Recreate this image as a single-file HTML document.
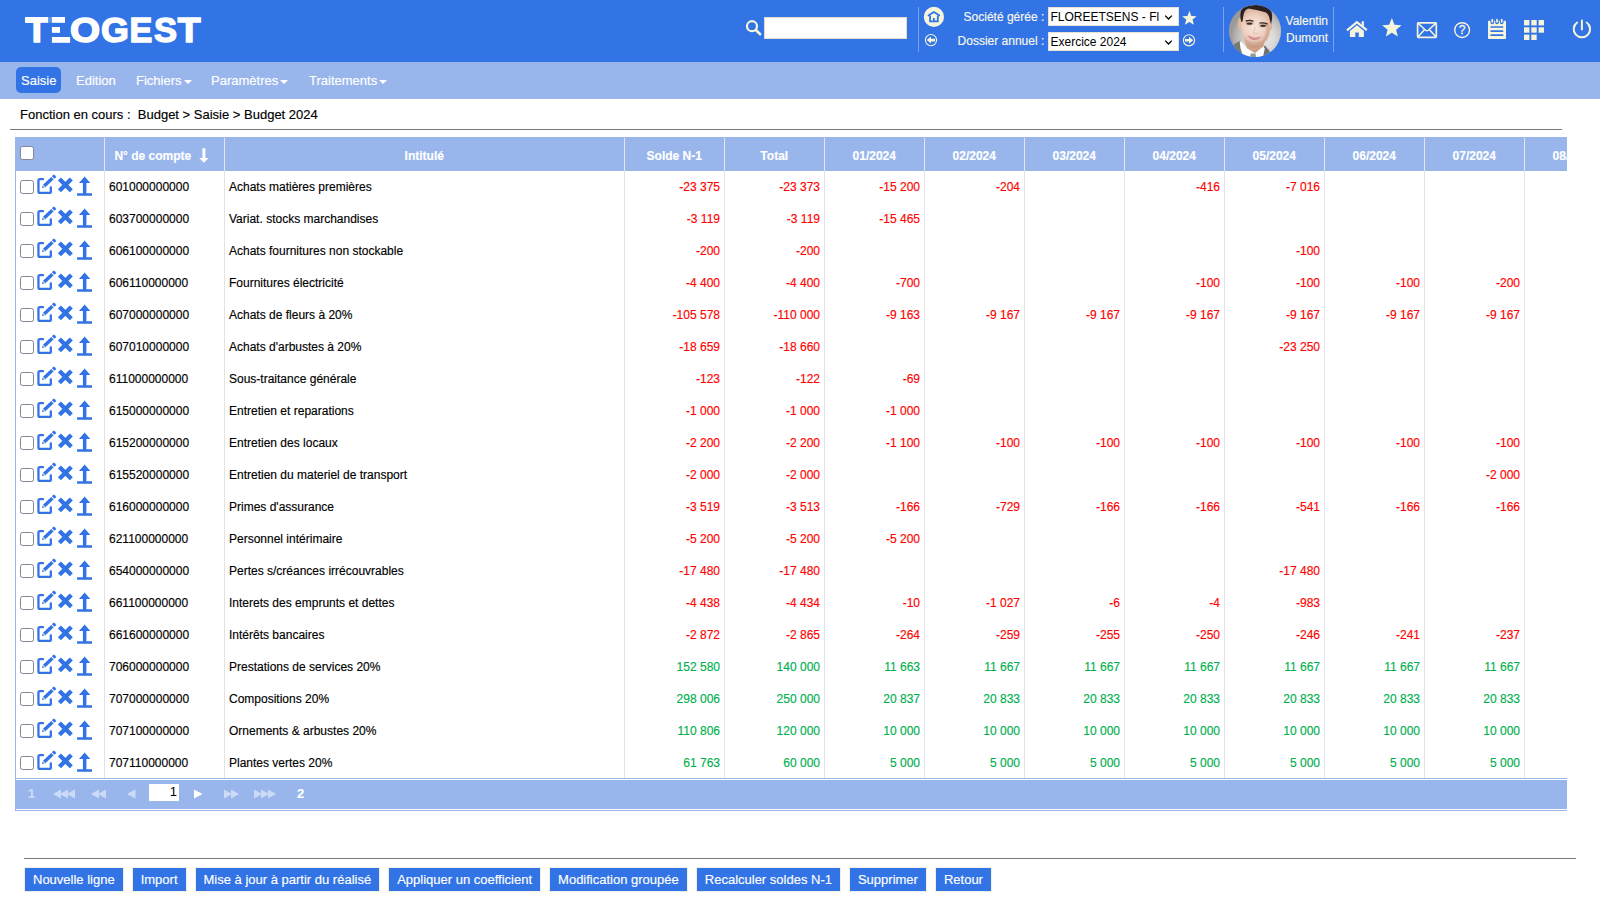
<!DOCTYPE html>
<html lang="fr"><head><meta charset="utf-8"><title>TEOGEST - Budget 2024</title>
<style>
*{box-sizing:border-box;}
html,body{margin:0;padding:0;}
body{width:1600px;height:900px;overflow:hidden;background:#fff;font-family:"Liberation Sans",sans-serif;font-size:12px;color:#000;position:relative;}
.abs{position:absolute;}
#top{position:absolute;left:0;top:0;width:1600px;height:62px;background:#3273e6;}
#nav{position:absolute;left:0;top:62px;width:1600px;height:37px;background:#99b6ec;}
#nav .it{position:absolute;top:5px;height:26px;line-height:28px;font-size:13px;color:#fff;white-space:nowrap;}
#nav .act{background:#3273e6;border-radius:5px;padding:0 5px;}
#nav .caret{display:inline-block;width:0;height:0;border-left:4px solid transparent;border-right:4px solid transparent;border-top:4px solid #fff;vertical-align:middle;margin-left:2px;position:relative;top:0px;}
#crumb{position:absolute;left:20px;top:107px;font-size:13px;line-height:16px;white-space:pre;color:#000;}
.hr{position:absolute;height:1px;background:#7a7a7a;}
#grid{position:absolute;left:15px;top:137px;width:1552px;height:674px;overflow:hidden;border-left:1px solid #99b6ec;}
#gridin{position:absolute;left:-1px;top:0;width:1700px;}
.hrow{height:34px;background:#99b6ec;white-space:nowrap;display:flex;}
.hc{height:34px;line-height:34px;font-weight:bold;color:#fff;text-align:center;font-size:12px;position:relative;flex:none;padding-top:2px;padding-right:1.5px;}
.hc:after{content:"";position:absolute;right:0;top:1px;bottom:0;width:1px;background:#e4e6ea;}
.row{height:32px;display:flex;white-space:nowrap;}
.c{height:32px;line-height:32px;border-right:1px solid #e2e2e2;flex:none;padding:0 4px;position:relative;overflow:hidden;}
.c0{width:90px;}
.c1{width:120px;}
.c2{width:400px;}
.cn{width:100px;}
.c.cn{text-align:right;}
.neg{color:#ff0000;}
.pos{color:#00b050;}
.cb{position:absolute;left:5px;top:9px;width:14px;height:14px;border:1px solid #85859a;border-radius:2.5px;background:#fff;}
.hcb{top:9px;}
.ic{position:absolute;overflow:visible;}
.ie{left:22px;top:4px;}
.ix{left:42px;top:6px;}
.iu{left:62px;top:5px;}
.sortarrow{position:absolute;left:93.6px;top:11px;}
#pager{position:absolute;left:15px;top:778px;width:1552px;height:33px;border-left:1px solid #99b6ec;}
#btns{position:absolute;left:24px;top:867px;display:flex;gap:8px;}
.btn{height:25px;line-height:23px;background:#3273e6;color:#fff;font-size:13px;border:1px solid #f1eee4;padding:0 8px;white-space:nowrap;flex:none;}
.lbl{font-size:12px;color:#f8f8ea;text-align:right;line-height:19px;white-space:nowrap;}
.sel{width:131px;height:19px;background:#fff;border:1px solid #e9e2d2;border-radius:0;font-size:12px;line-height:19px;color:#000;overflow:hidden;white-space:nowrap;}
.sel span{position:absolute;left:1.5px;top:0;width:109px;overflow:hidden;display:block;}
.sel .chev{position:absolute;right:5px;top:6px;}
.uname{font-size:12px;line-height:17px;color:#f8f8e8;text-align:right;white-space:nowrap;}
.pg{font-size:13px;font-weight:bold;color:#fff;line-height:16px;}
.dim{opacity:.5;}
.hc.c1{text-align:left;padding-left:9.4px;}
.c,#crumb{-webkit-text-stroke:0.15px currentColor;}
#nav .it,.btn,.lbl,.uname,.hc,.pg{-webkit-text-stroke:0.15px currentColor;}

</style></head>
<body>
<div id="top">
<svg class="abs" style="left:0;top:0" width="230" height="62" viewBox="0 0 230 62" role="img" aria-label="TEOGEST"><title>TEOGEST</title>
<g font-family="Liberation Sans, sans-serif" font-weight="bold" font-size="34" fill="#fff" stroke="#fff" stroke-width="1.4">
<text transform="translate(25.57 42.02) scale(1.0871 1.0424)">T</text>
<text transform="translate(42.96 42.02) scale(1.2293 1.0424)">E</text>
<rect x="41.3" y="15" width="29.3" height="29" fill="#3273e6" stroke="none"/>
<rect x="25.3" y="17" width="23.1" height="5.8" fill="#fff" stroke="none"/>
<rect x="48.4" y="17" width="3.5" height="5.8" fill="#5f92ec" stroke="none"/>
<rect x="51.9" y="17" width="13.1" height="5.8" fill="#fff" stroke="none"/>
<rect x="51.9" y="27" width="8.1" height="5.8" fill="#fff" stroke="none"/>
<rect x="51.9" y="37" width="18.1" height="5.8" fill="#fff" stroke="none"/>
<text transform="translate(70.05 42.06) scale(1.1400 1.0392)">O</text>
<text transform="translate(100.96 42.06) scale(1.0536 1.0392)">G</text>
<text transform="translate(129.49 42.12) scale(1.0049 1.0424)">E</text>
<text transform="translate(154.05 42.06) scale(1.0161 1.0392)">S</text>
<text transform="translate(177.77 42.12) scale(1.0965 1.0424)">T</text>
</g>
</svg>
<svg class="abs" style="left:744px;top:18px" width="20" height="20" viewBox="0 0 20 20"><circle cx="8" cy="8.2" r="5" fill="none" stroke="#f5f5dc" stroke-width="2.2"/><path d="M11.8 12L16.2 16.2" stroke="#f5f5dc" stroke-width="2.6" stroke-linecap="round"/></svg>
<div class="abs" style="left:764px;top:17px;width:142.5px;height:22px;background:#fff;border:1px solid #e6dcc8;"></div>
<div class="abs" style="left:918px;top:7px;width:1px;height:45px;background:#7aa3ee;"></div>
<svg class="abs" style="left:923px;top:6px" width="22" height="22" viewBox="0 0 22 22"><circle cx="10.9" cy="10.9" r="10.1" fill="#f5f5dc"/><path d="M4.9 9.8L10.9 6L16.9 9.8" fill="none" stroke="#3273e6" stroke-width="1.7" stroke-linejoin="miter"/><path d="M7.1 9.6V15.4H14.8V9.6" fill="none" stroke="#3273e6" stroke-width="1.8"/><rect x="10" y="12" width="1.8" height="3.2" fill="#3273e6"/></svg>
<svg class="abs" style="left:924px;top:33px" width="15" height="15" viewBox="0 0 15 15"><circle cx="7" cy="7.1" r="5.6" fill="none" stroke="#f5f5dc" stroke-width="1.1"/><path d="M2.8 7.1L7 3.6V5.8H11.1V8.4H7V10.6Z" fill="#f5f5dc"/></svg>
<div class="abs lbl" style="left:940px;top:8px;width:104.3px;">Société gérée :</div>
<div class="abs lbl" style="left:940px;top:32px;width:104.3px;">Dossier annuel :</div>
<div class="abs sel" style="left:1048px;top:7px;"><span>FLOREETSENS - Fl</span><svg class="chev" width="9" height="7" viewBox="0 0 9 7"><path d="M1.2 1.6L4.5 5L7.8 1.6" fill="none" stroke="#000" stroke-width="1.3"/></svg></div>
<div class="abs sel" style="left:1048px;top:32px;line-height:18px;"><span>Exercice 2024</span><svg class="chev" width="9" height="7" viewBox="0 0 9 7"><path d="M1.2 1.6L4.5 5L7.8 1.6" fill="none" stroke="#000" stroke-width="1.3"/></svg></div>
<svg class="abs" style="left:1181px;top:9.5px" width="17" height="17" viewBox="0 0 17 17"><path d="M8.40 1.00L10.34 5.93L15.63 6.25L11.54 9.62L12.87 14.75L8.40 11.90L3.93 14.75L5.26 9.62L1.17 6.25L6.46 5.93Z" fill="#f5f5dc"/></svg>
<svg class="abs" style="left:1181px;top:33px" width="16" height="15" viewBox="0 0 16 15"><circle cx="8" cy="7.3" r="5.6" fill="none" stroke="#f5f5dc" stroke-width="1.1"/><path d="M12.2 7.3L8 3.8V6H3.9V8.6H8V10.8Z" fill="#f5f5dc"/></svg>
<div class="abs" style="left:1223px;top:7px;width:1px;height:45px;background:#7aa3ee;"></div>
<svg class="abs" style="left:1226px;top:2px" width="58" height="58" viewBox="0 0 900 900">
<defs>
<clipPath id="avc"><circle cx="450" cy="450" r="405"/></clipPath>
<radialGradient id="avbg" gradientUnits="userSpaceOnUse" cx="540" cy="560" r="470"><stop offset="0" stop-color="#eeecea"/><stop offset="0.45" stop-color="#dcdad7"/><stop offset="0.8" stop-color="#b9b7b5"/><stop offset="1" stop-color="#9c9a99"/></radialGradient>
<radialGradient id="avskin" gradientUnits="userSpaceOnUse" cx="440" cy="380" r="330"><stop offset="0" stop-color="#f7e6dd"/><stop offset="0.5" stop-color="#efd2c2"/><stop offset="0.85" stop-color="#dcb29b"/><stop offset="1" stop-color="#b98b70"/></radialGradient>
<filter id="avbl" x="-5%" y="-5%" width="110%" height="110%"><feGaussianBlur stdDeviation="9"/></filter>
<filter id="avbl2" x="-20%" y="-20%" width="140%" height="140%"><feGaussianBlur stdDeviation="14"/></filter>
</defs>
<g clip-path="url(#avc)">
<rect x="0" y="0" width="900" height="900" fill="url(#avbg)"/>
<g filter="url(#avbl)">
<path d="M100 720L125 655L215 600L250 650L320 900H100Z" fill="#747978"/>
<path d="M575 700L605 675L675 760L720 900H530Z" fill="#6d7271"/>
<path d="M212 612L245 618L330 720L450 795L578 688L602 722L565 900H285L225 720Z" fill="#fbfbfb"/>
<path d="M382 800H458L472 900H368Z" fill="#8f9a98"/>
<path d="M285 590L605 590L578 690L450 792L330 718Z" fill="#cfa084"/>
<ellipse cx="210" cy="335" rx="26" ry="88" fill="#e2b89f"/>
<ellipse cx="690" cy="370" rx="20" ry="70" fill="#d3a58b"/>
<path d="M232 240Q225 420 272 565Q340 690 440 706Q540 700 640 570Q702 440 700 290Q690 110 470 85Q260 90 232 240Z" fill="url(#avskin)"/>
<path d="M640 300Q700 420 640 570Q610 620 560 660Q640 520 640 300Z" fill="#c4947a" opacity="0.6" filter="url(#avbl2)"/>
<path d="M280 560Q440 700 630 560Q560 705 440 708Q340 700 280 560Z" fill="#c59a82" opacity="0.45"/>
<path d="M238 310Q205 190 240 120Q300 50 470 45Q640 50 705 150Q730 230 698 345Q680 280 668 225Q650 175 610 160Q500 125 350 100Q300 110 280 170Q262 230 258 300Z" fill="#2a2220"/>
<ellipse cx="368" cy="325" rx="70" ry="30" fill="#b88a74" opacity="0.55" filter="url(#avbl2)"/>
<ellipse cx="580" cy="358" rx="70" ry="30" fill="#b88a74" opacity="0.55" filter="url(#avbl2)"/>
<path d="M305 298Q365 272 425 300" stroke="#3a2a24" stroke-width="22" fill="none"/>
<path d="M520 328Q585 314 645 345" stroke="#3a2a24" stroke-width="22" fill="none"/>
<ellipse cx="365" cy="336" rx="48" ry="17" fill="#40302a"/>
<ellipse cx="575" cy="370" rx="48" ry="17" fill="#40302a"/>
<path d="M455 380Q440 450 425 480Q450 500 490 488" stroke="#d6a58d" stroke-width="14" fill="none" opacity="0.55"/>
<path d="M330 515Q430 560 545 540Q500 595 430 590Q365 580 330 515Z" fill="#d58a8e"/>
<path d="M365 535Q435 560 515 548Q440 572 365 535Z" fill="#f1d4d0"/>
</g>
</g>
</svg>

<div class="abs uname" style="left:1278px;top:13px;width:50px;">Valentin<br>Dumont</div>
<div class="abs" style="left:1333px;top:7px;width:1px;height:45px;background:#7aa3ee;"></div>
<svg class="abs" style="left:1340px;top:0" width="260" height="62" viewBox="0 0 260 62" fill="#f5f5dc">
<!-- home -->
<path d="M7 30.4L16.9 22.2L26.8 30.2" fill="none" stroke="#f5f5dc" stroke-width="2.3" stroke-linejoin="miter"/>
<path d="M21.7 21.3H23.9V27.5L21.7 25.5Z"/>
<path d="M9.9 31L16.9 25.2L23.9 31V36.9H18.8V32.6H15.3V36.9H9.9Z"/>
<!-- star -->
<path d="M51.85 18.10L54.50 24.66L61.55 25.15L56.13 29.69L57.85 36.55L51.85 32.80L45.85 36.55L47.57 29.69L42.15 25.15L49.20 24.66Z"/>
<!-- envelope -->
<rect x="77.6" y="22.8" width="18.7" height="14.5" rx="0.8" fill="none" stroke="#f5f5dc" stroke-width="1.7"/>
<path d="M77.6 22.9L85.6 30.2Q86.95 31.4 88.3 30.2L96.3 22.9M77.6 37.2L84.6 29.6M96.3 37.2L89.3 29.6" fill="none" stroke="#f5f5dc" stroke-width="1.5"/>
<!-- help -->
<circle cx="122.1" cy="30.1" r="7.4" fill="none" stroke="#f5f5dc" stroke-width="1.4"/>
<text x="122.1" y="34.3" font-family="Liberation Sans, sans-serif" font-size="12" text-anchor="middle" stroke="#f5f5dc" stroke-width="0.3">?</text>
<!-- notepad -->
<rect x="148" y="20.8" width="18" height="18.2" rx="0.8"/>
<g stroke="#3273e6" stroke-width="1.7" stroke-linecap="round"><path d="M151.2 27H162.6M151.2 31.15H162.6M151.2 35.15H162.6"/></g>
<g fill="#3273e6"><path d="M150.5 20.2H154.1V22.4Q154.1 24.2 152.3 24.2Q150.5 24.2 150.5 22.4Z"/><path d="M155.2 20.2H158.8V22.4Q158.8 24.2 157 24.2Q155.2 24.2 155.2 22.4Z"/><path d="M159.9 20.2H163.5V22.4Q163.5 24.2 161.7 24.2Q159.9 24.2 159.9 22.4Z"/></g>
<g><rect x="151.45" y="18.8" width="1.7" height="3.9" rx="0.85"/><rect x="156.15" y="18.8" width="1.7" height="3.9" rx="0.85"/><rect x="160.85" y="18.8" width="1.7" height="3.9" rx="0.85"/></g>
<!-- grid -->
<g><rect x="184" y="20" width="5.4" height="5.4"/><rect x="191.3" y="20" width="5.4" height="5.4"/><rect x="198.6" y="20" width="5.4" height="5.4"/>
<rect x="184" y="27.3" width="5.4" height="5.4"/><rect x="191.3" y="27.3" width="5.4" height="5.4"/><rect x="198.6" y="27.3" width="5.4" height="5.4"/>
<rect x="184" y="34.6" width="5.4" height="5.4"/><rect x="191.3" y="34.6" width="5.4" height="5.4"/></g>
<!-- power -->
<path d="M237.1 22.5A8.2 8.2 0 1 0 246.7 22.5" fill="none" stroke="#f5f5dc" stroke-width="2" stroke-linecap="round"/>
<path d="M241.9 20.6V29.4" fill="none" stroke="#f5f5dc" stroke-width="2" stroke-linecap="round"/>
</svg>

</div>
<div id="nav">
<div class="it act" style="left:16px;">Saisie</div>
<div class="it" style="left:76px;">Edition</div>
<div class="it" style="left:136px;">Fichiers<span class="caret"></span></div>
<div class="it" style="left:211px;">Paramètres<span class="caret"></span></div>
<div class="it" style="left:309px;">Traitements<span class="caret"></span></div>
</div>
<div id="crumb">Fonction en cours :  Budget &gt; Saisie &gt; Budget 2024</div>
<div class="hr" style="left:10px;top:129px;width:1552px;"></div>
<div id="grid">
<div id="gridin">
<div class="hrow"><div class="hc c0"><span class="cb hcb"></span></div><div class="hc c1"><span class="htx">N° de compte</span><svg class="sortarrow" width="10" height="15" viewBox="0 0 10 15"><path d="M3.4 0.3H6.4V10H9.6L4.9 14.8L0.2 10H3.4Z" fill="#fff"/></svg></div><div class="hc c2">Intitulé</div><div class="hc cn">Solde N-1</div><div class="hc cn">Total</div><div class="hc cn">01/2024</div><div class="hc cn">02/2024</div><div class="hc cn">03/2024</div><div class="hc cn">04/2024</div><div class="hc cn">05/2024</div><div class="hc cn">06/2024</div><div class="hc cn">07/2024</div><div class="hc cn">08/2024</div></div>
<div class="row"><div class="c c0"><span class="cb"></span><svg class="ic ie" width="20" height="21" viewBox="0 0 20 21"><path d="M6 4.15H2.9Q1.45 4.15 1.45 5.6V16.4Q1.45 17.85 2.9 17.85H12.4Q13.85 17.85 13.85 16.4V12.3" fill="none" stroke="#3273e6" stroke-width="2.3" stroke-linecap="round"/><path d="M5.00 13.00L5.74 10.58L7.46 12.39Z" fill="#3273e6"/><path d="M5.97 9.67L14.17 1.89L16.58 4.43L8.38 12.20Z" fill="#3273e6"/><path d="M14.89 1.20L16.42 -0.25L17.55 -0.22L18.86 1.16L18.83 2.29L17.30 3.74Z" fill="#3273e6"/></svg><svg class="ic ix" width="15.8" height="15.8" viewBox="0 0 15 15"><path transform="translate(0.45 0)" d="M3.3 3.3L11.7 11.7M11.7 3.3L3.3 11.7" stroke="#3273e6" stroke-width="4.1" stroke-linecap="square" fill="none"/></svg><svg class="ic iu" width="16" height="20" viewBox="0 0 16 20"><path transform="translate(-0.3 0.3)" d="M7.9 0.3L13.6 6.7H9.7V17H15.4V19.4H0.4V17H6.2V6.7H2.3Z" fill="#3273e6"/></svg></div><div class="c c1">601000000000</div><div class="c c2">Achats matières premières</div><div class="c cn neg">-23 375</div><div class="c cn neg">-23 373</div><div class="c cn neg">-15 200</div><div class="c cn neg">-204</div><div class="c cn pos"></div><div class="c cn neg">-416</div><div class="c cn neg">-7 016</div><div class="c cn pos"></div><div class="c cn pos"></div><div class="c cn"></div></div>
<div class="row"><div class="c c0"><span class="cb"></span><svg class="ic ie" width="20" height="21" viewBox="0 0 20 21"><path d="M6 4.15H2.9Q1.45 4.15 1.45 5.6V16.4Q1.45 17.85 2.9 17.85H12.4Q13.85 17.85 13.85 16.4V12.3" fill="none" stroke="#3273e6" stroke-width="2.3" stroke-linecap="round"/><path d="M5.00 13.00L5.74 10.58L7.46 12.39Z" fill="#3273e6"/><path d="M5.97 9.67L14.17 1.89L16.58 4.43L8.38 12.20Z" fill="#3273e6"/><path d="M14.89 1.20L16.42 -0.25L17.55 -0.22L18.86 1.16L18.83 2.29L17.30 3.74Z" fill="#3273e6"/></svg><svg class="ic ix" width="15.8" height="15.8" viewBox="0 0 15 15"><path transform="translate(0.45 0)" d="M3.3 3.3L11.7 11.7M11.7 3.3L3.3 11.7" stroke="#3273e6" stroke-width="4.1" stroke-linecap="square" fill="none"/></svg><svg class="ic iu" width="16" height="20" viewBox="0 0 16 20"><path transform="translate(-0.3 0.3)" d="M7.9 0.3L13.6 6.7H9.7V17H15.4V19.4H0.4V17H6.2V6.7H2.3Z" fill="#3273e6"/></svg></div><div class="c c1">603700000000</div><div class="c c2">Variat. stocks marchandises</div><div class="c cn neg">-3 119</div><div class="c cn neg">-3 119</div><div class="c cn neg">-15 465</div><div class="c cn pos"></div><div class="c cn pos"></div><div class="c cn pos"></div><div class="c cn pos"></div><div class="c cn pos"></div><div class="c cn pos"></div><div class="c cn"></div></div>
<div class="row"><div class="c c0"><span class="cb"></span><svg class="ic ie" width="20" height="21" viewBox="0 0 20 21"><path d="M6 4.15H2.9Q1.45 4.15 1.45 5.6V16.4Q1.45 17.85 2.9 17.85H12.4Q13.85 17.85 13.85 16.4V12.3" fill="none" stroke="#3273e6" stroke-width="2.3" stroke-linecap="round"/><path d="M5.00 13.00L5.74 10.58L7.46 12.39Z" fill="#3273e6"/><path d="M5.97 9.67L14.17 1.89L16.58 4.43L8.38 12.20Z" fill="#3273e6"/><path d="M14.89 1.20L16.42 -0.25L17.55 -0.22L18.86 1.16L18.83 2.29L17.30 3.74Z" fill="#3273e6"/></svg><svg class="ic ix" width="15.8" height="15.8" viewBox="0 0 15 15"><path transform="translate(0.45 0)" d="M3.3 3.3L11.7 11.7M11.7 3.3L3.3 11.7" stroke="#3273e6" stroke-width="4.1" stroke-linecap="square" fill="none"/></svg><svg class="ic iu" width="16" height="20" viewBox="0 0 16 20"><path transform="translate(-0.3 0.3)" d="M7.9 0.3L13.6 6.7H9.7V17H15.4V19.4H0.4V17H6.2V6.7H2.3Z" fill="#3273e6"/></svg></div><div class="c c1">606100000000</div><div class="c c2">Achats fournitures non stockable</div><div class="c cn neg">-200</div><div class="c cn neg">-200</div><div class="c cn pos"></div><div class="c cn pos"></div><div class="c cn pos"></div><div class="c cn pos"></div><div class="c cn neg">-100</div><div class="c cn pos"></div><div class="c cn pos"></div><div class="c cn"></div></div>
<div class="row"><div class="c c0"><span class="cb"></span><svg class="ic ie" width="20" height="21" viewBox="0 0 20 21"><path d="M6 4.15H2.9Q1.45 4.15 1.45 5.6V16.4Q1.45 17.85 2.9 17.85H12.4Q13.85 17.85 13.85 16.4V12.3" fill="none" stroke="#3273e6" stroke-width="2.3" stroke-linecap="round"/><path d="M5.00 13.00L5.74 10.58L7.46 12.39Z" fill="#3273e6"/><path d="M5.97 9.67L14.17 1.89L16.58 4.43L8.38 12.20Z" fill="#3273e6"/><path d="M14.89 1.20L16.42 -0.25L17.55 -0.22L18.86 1.16L18.83 2.29L17.30 3.74Z" fill="#3273e6"/></svg><svg class="ic ix" width="15.8" height="15.8" viewBox="0 0 15 15"><path transform="translate(0.45 0)" d="M3.3 3.3L11.7 11.7M11.7 3.3L3.3 11.7" stroke="#3273e6" stroke-width="4.1" stroke-linecap="square" fill="none"/></svg><svg class="ic iu" width="16" height="20" viewBox="0 0 16 20"><path transform="translate(-0.3 0.3)" d="M7.9 0.3L13.6 6.7H9.7V17H15.4V19.4H0.4V17H6.2V6.7H2.3Z" fill="#3273e6"/></svg></div><div class="c c1">606110000000</div><div class="c c2">Fournitures électricité</div><div class="c cn neg">-4 400</div><div class="c cn neg">-4 400</div><div class="c cn neg">-700</div><div class="c cn pos"></div><div class="c cn pos"></div><div class="c cn neg">-100</div><div class="c cn neg">-100</div><div class="c cn neg">-100</div><div class="c cn neg">-200</div><div class="c cn"></div></div>
<div class="row"><div class="c c0"><span class="cb"></span><svg class="ic ie" width="20" height="21" viewBox="0 0 20 21"><path d="M6 4.15H2.9Q1.45 4.15 1.45 5.6V16.4Q1.45 17.85 2.9 17.85H12.4Q13.85 17.85 13.85 16.4V12.3" fill="none" stroke="#3273e6" stroke-width="2.3" stroke-linecap="round"/><path d="M5.00 13.00L5.74 10.58L7.46 12.39Z" fill="#3273e6"/><path d="M5.97 9.67L14.17 1.89L16.58 4.43L8.38 12.20Z" fill="#3273e6"/><path d="M14.89 1.20L16.42 -0.25L17.55 -0.22L18.86 1.16L18.83 2.29L17.30 3.74Z" fill="#3273e6"/></svg><svg class="ic ix" width="15.8" height="15.8" viewBox="0 0 15 15"><path transform="translate(0.45 0)" d="M3.3 3.3L11.7 11.7M11.7 3.3L3.3 11.7" stroke="#3273e6" stroke-width="4.1" stroke-linecap="square" fill="none"/></svg><svg class="ic iu" width="16" height="20" viewBox="0 0 16 20"><path transform="translate(-0.3 0.3)" d="M7.9 0.3L13.6 6.7H9.7V17H15.4V19.4H0.4V17H6.2V6.7H2.3Z" fill="#3273e6"/></svg></div><div class="c c1">607000000000</div><div class="c c2">Achats de fleurs à 20%</div><div class="c cn neg">-105 578</div><div class="c cn neg">-110 000</div><div class="c cn neg">-9 163</div><div class="c cn neg">-9 167</div><div class="c cn neg">-9 167</div><div class="c cn neg">-9 167</div><div class="c cn neg">-9 167</div><div class="c cn neg">-9 167</div><div class="c cn neg">-9 167</div><div class="c cn"></div></div>
<div class="row"><div class="c c0"><span class="cb"></span><svg class="ic ie" width="20" height="21" viewBox="0 0 20 21"><path d="M6 4.15H2.9Q1.45 4.15 1.45 5.6V16.4Q1.45 17.85 2.9 17.85H12.4Q13.85 17.85 13.85 16.4V12.3" fill="none" stroke="#3273e6" stroke-width="2.3" stroke-linecap="round"/><path d="M5.00 13.00L5.74 10.58L7.46 12.39Z" fill="#3273e6"/><path d="M5.97 9.67L14.17 1.89L16.58 4.43L8.38 12.20Z" fill="#3273e6"/><path d="M14.89 1.20L16.42 -0.25L17.55 -0.22L18.86 1.16L18.83 2.29L17.30 3.74Z" fill="#3273e6"/></svg><svg class="ic ix" width="15.8" height="15.8" viewBox="0 0 15 15"><path transform="translate(0.45 0)" d="M3.3 3.3L11.7 11.7M11.7 3.3L3.3 11.7" stroke="#3273e6" stroke-width="4.1" stroke-linecap="square" fill="none"/></svg><svg class="ic iu" width="16" height="20" viewBox="0 0 16 20"><path transform="translate(-0.3 0.3)" d="M7.9 0.3L13.6 6.7H9.7V17H15.4V19.4H0.4V17H6.2V6.7H2.3Z" fill="#3273e6"/></svg></div><div class="c c1">607010000000</div><div class="c c2">Achats d'arbustes à 20%</div><div class="c cn neg">-18 659</div><div class="c cn neg">-18 660</div><div class="c cn pos"></div><div class="c cn pos"></div><div class="c cn pos"></div><div class="c cn pos"></div><div class="c cn neg">-23 250</div><div class="c cn pos"></div><div class="c cn pos"></div><div class="c cn"></div></div>
<div class="row"><div class="c c0"><span class="cb"></span><svg class="ic ie" width="20" height="21" viewBox="0 0 20 21"><path d="M6 4.15H2.9Q1.45 4.15 1.45 5.6V16.4Q1.45 17.85 2.9 17.85H12.4Q13.85 17.85 13.85 16.4V12.3" fill="none" stroke="#3273e6" stroke-width="2.3" stroke-linecap="round"/><path d="M5.00 13.00L5.74 10.58L7.46 12.39Z" fill="#3273e6"/><path d="M5.97 9.67L14.17 1.89L16.58 4.43L8.38 12.20Z" fill="#3273e6"/><path d="M14.89 1.20L16.42 -0.25L17.55 -0.22L18.86 1.16L18.83 2.29L17.30 3.74Z" fill="#3273e6"/></svg><svg class="ic ix" width="15.8" height="15.8" viewBox="0 0 15 15"><path transform="translate(0.45 0)" d="M3.3 3.3L11.7 11.7M11.7 3.3L3.3 11.7" stroke="#3273e6" stroke-width="4.1" stroke-linecap="square" fill="none"/></svg><svg class="ic iu" width="16" height="20" viewBox="0 0 16 20"><path transform="translate(-0.3 0.3)" d="M7.9 0.3L13.6 6.7H9.7V17H15.4V19.4H0.4V17H6.2V6.7H2.3Z" fill="#3273e6"/></svg></div><div class="c c1">611000000000</div><div class="c c2">Sous-traitance générale</div><div class="c cn neg">-123</div><div class="c cn neg">-122</div><div class="c cn neg">-69</div><div class="c cn pos"></div><div class="c cn pos"></div><div class="c cn pos"></div><div class="c cn pos"></div><div class="c cn pos"></div><div class="c cn pos"></div><div class="c cn"></div></div>
<div class="row"><div class="c c0"><span class="cb"></span><svg class="ic ie" width="20" height="21" viewBox="0 0 20 21"><path d="M6 4.15H2.9Q1.45 4.15 1.45 5.6V16.4Q1.45 17.85 2.9 17.85H12.4Q13.85 17.85 13.85 16.4V12.3" fill="none" stroke="#3273e6" stroke-width="2.3" stroke-linecap="round"/><path d="M5.00 13.00L5.74 10.58L7.46 12.39Z" fill="#3273e6"/><path d="M5.97 9.67L14.17 1.89L16.58 4.43L8.38 12.20Z" fill="#3273e6"/><path d="M14.89 1.20L16.42 -0.25L17.55 -0.22L18.86 1.16L18.83 2.29L17.30 3.74Z" fill="#3273e6"/></svg><svg class="ic ix" width="15.8" height="15.8" viewBox="0 0 15 15"><path transform="translate(0.45 0)" d="M3.3 3.3L11.7 11.7M11.7 3.3L3.3 11.7" stroke="#3273e6" stroke-width="4.1" stroke-linecap="square" fill="none"/></svg><svg class="ic iu" width="16" height="20" viewBox="0 0 16 20"><path transform="translate(-0.3 0.3)" d="M7.9 0.3L13.6 6.7H9.7V17H15.4V19.4H0.4V17H6.2V6.7H2.3Z" fill="#3273e6"/></svg></div><div class="c c1">615000000000</div><div class="c c2">Entretien et reparations</div><div class="c cn neg">-1 000</div><div class="c cn neg">-1 000</div><div class="c cn neg">-1 000</div><div class="c cn pos"></div><div class="c cn pos"></div><div class="c cn pos"></div><div class="c cn pos"></div><div class="c cn pos"></div><div class="c cn pos"></div><div class="c cn"></div></div>
<div class="row"><div class="c c0"><span class="cb"></span><svg class="ic ie" width="20" height="21" viewBox="0 0 20 21"><path d="M6 4.15H2.9Q1.45 4.15 1.45 5.6V16.4Q1.45 17.85 2.9 17.85H12.4Q13.85 17.85 13.85 16.4V12.3" fill="none" stroke="#3273e6" stroke-width="2.3" stroke-linecap="round"/><path d="M5.00 13.00L5.74 10.58L7.46 12.39Z" fill="#3273e6"/><path d="M5.97 9.67L14.17 1.89L16.58 4.43L8.38 12.20Z" fill="#3273e6"/><path d="M14.89 1.20L16.42 -0.25L17.55 -0.22L18.86 1.16L18.83 2.29L17.30 3.74Z" fill="#3273e6"/></svg><svg class="ic ix" width="15.8" height="15.8" viewBox="0 0 15 15"><path transform="translate(0.45 0)" d="M3.3 3.3L11.7 11.7M11.7 3.3L3.3 11.7" stroke="#3273e6" stroke-width="4.1" stroke-linecap="square" fill="none"/></svg><svg class="ic iu" width="16" height="20" viewBox="0 0 16 20"><path transform="translate(-0.3 0.3)" d="M7.9 0.3L13.6 6.7H9.7V17H15.4V19.4H0.4V17H6.2V6.7H2.3Z" fill="#3273e6"/></svg></div><div class="c c1">615200000000</div><div class="c c2">Entretien des locaux</div><div class="c cn neg">-2 200</div><div class="c cn neg">-2 200</div><div class="c cn neg">-1 100</div><div class="c cn neg">-100</div><div class="c cn neg">-100</div><div class="c cn neg">-100</div><div class="c cn neg">-100</div><div class="c cn neg">-100</div><div class="c cn neg">-100</div><div class="c cn"></div></div>
<div class="row"><div class="c c0"><span class="cb"></span><svg class="ic ie" width="20" height="21" viewBox="0 0 20 21"><path d="M6 4.15H2.9Q1.45 4.15 1.45 5.6V16.4Q1.45 17.85 2.9 17.85H12.4Q13.85 17.85 13.85 16.4V12.3" fill="none" stroke="#3273e6" stroke-width="2.3" stroke-linecap="round"/><path d="M5.00 13.00L5.74 10.58L7.46 12.39Z" fill="#3273e6"/><path d="M5.97 9.67L14.17 1.89L16.58 4.43L8.38 12.20Z" fill="#3273e6"/><path d="M14.89 1.20L16.42 -0.25L17.55 -0.22L18.86 1.16L18.83 2.29L17.30 3.74Z" fill="#3273e6"/></svg><svg class="ic ix" width="15.8" height="15.8" viewBox="0 0 15 15"><path transform="translate(0.45 0)" d="M3.3 3.3L11.7 11.7M11.7 3.3L3.3 11.7" stroke="#3273e6" stroke-width="4.1" stroke-linecap="square" fill="none"/></svg><svg class="ic iu" width="16" height="20" viewBox="0 0 16 20"><path transform="translate(-0.3 0.3)" d="M7.9 0.3L13.6 6.7H9.7V17H15.4V19.4H0.4V17H6.2V6.7H2.3Z" fill="#3273e6"/></svg></div><div class="c c1">615520000000</div><div class="c c2">Entretien du materiel de transport</div><div class="c cn neg">-2 000</div><div class="c cn neg">-2 000</div><div class="c cn pos"></div><div class="c cn pos"></div><div class="c cn pos"></div><div class="c cn pos"></div><div class="c cn pos"></div><div class="c cn pos"></div><div class="c cn neg">-2 000</div><div class="c cn"></div></div>
<div class="row"><div class="c c0"><span class="cb"></span><svg class="ic ie" width="20" height="21" viewBox="0 0 20 21"><path d="M6 4.15H2.9Q1.45 4.15 1.45 5.6V16.4Q1.45 17.85 2.9 17.85H12.4Q13.85 17.85 13.85 16.4V12.3" fill="none" stroke="#3273e6" stroke-width="2.3" stroke-linecap="round"/><path d="M5.00 13.00L5.74 10.58L7.46 12.39Z" fill="#3273e6"/><path d="M5.97 9.67L14.17 1.89L16.58 4.43L8.38 12.20Z" fill="#3273e6"/><path d="M14.89 1.20L16.42 -0.25L17.55 -0.22L18.86 1.16L18.83 2.29L17.30 3.74Z" fill="#3273e6"/></svg><svg class="ic ix" width="15.8" height="15.8" viewBox="0 0 15 15"><path transform="translate(0.45 0)" d="M3.3 3.3L11.7 11.7M11.7 3.3L3.3 11.7" stroke="#3273e6" stroke-width="4.1" stroke-linecap="square" fill="none"/></svg><svg class="ic iu" width="16" height="20" viewBox="0 0 16 20"><path transform="translate(-0.3 0.3)" d="M7.9 0.3L13.6 6.7H9.7V17H15.4V19.4H0.4V17H6.2V6.7H2.3Z" fill="#3273e6"/></svg></div><div class="c c1">616000000000</div><div class="c c2">Primes d'assurance</div><div class="c cn neg">-3 519</div><div class="c cn neg">-3 513</div><div class="c cn neg">-166</div><div class="c cn neg">-729</div><div class="c cn neg">-166</div><div class="c cn neg">-166</div><div class="c cn neg">-541</div><div class="c cn neg">-166</div><div class="c cn neg">-166</div><div class="c cn"></div></div>
<div class="row"><div class="c c0"><span class="cb"></span><svg class="ic ie" width="20" height="21" viewBox="0 0 20 21"><path d="M6 4.15H2.9Q1.45 4.15 1.45 5.6V16.4Q1.45 17.85 2.9 17.85H12.4Q13.85 17.85 13.85 16.4V12.3" fill="none" stroke="#3273e6" stroke-width="2.3" stroke-linecap="round"/><path d="M5.00 13.00L5.74 10.58L7.46 12.39Z" fill="#3273e6"/><path d="M5.97 9.67L14.17 1.89L16.58 4.43L8.38 12.20Z" fill="#3273e6"/><path d="M14.89 1.20L16.42 -0.25L17.55 -0.22L18.86 1.16L18.83 2.29L17.30 3.74Z" fill="#3273e6"/></svg><svg class="ic ix" width="15.8" height="15.8" viewBox="0 0 15 15"><path transform="translate(0.45 0)" d="M3.3 3.3L11.7 11.7M11.7 3.3L3.3 11.7" stroke="#3273e6" stroke-width="4.1" stroke-linecap="square" fill="none"/></svg><svg class="ic iu" width="16" height="20" viewBox="0 0 16 20"><path transform="translate(-0.3 0.3)" d="M7.9 0.3L13.6 6.7H9.7V17H15.4V19.4H0.4V17H6.2V6.7H2.3Z" fill="#3273e6"/></svg></div><div class="c c1">621100000000</div><div class="c c2">Personnel intérimaire</div><div class="c cn neg">-5 200</div><div class="c cn neg">-5 200</div><div class="c cn neg">-5 200</div><div class="c cn pos"></div><div class="c cn pos"></div><div class="c cn pos"></div><div class="c cn pos"></div><div class="c cn pos"></div><div class="c cn pos"></div><div class="c cn"></div></div>
<div class="row"><div class="c c0"><span class="cb"></span><svg class="ic ie" width="20" height="21" viewBox="0 0 20 21"><path d="M6 4.15H2.9Q1.45 4.15 1.45 5.6V16.4Q1.45 17.85 2.9 17.85H12.4Q13.85 17.85 13.85 16.4V12.3" fill="none" stroke="#3273e6" stroke-width="2.3" stroke-linecap="round"/><path d="M5.00 13.00L5.74 10.58L7.46 12.39Z" fill="#3273e6"/><path d="M5.97 9.67L14.17 1.89L16.58 4.43L8.38 12.20Z" fill="#3273e6"/><path d="M14.89 1.20L16.42 -0.25L17.55 -0.22L18.86 1.16L18.83 2.29L17.30 3.74Z" fill="#3273e6"/></svg><svg class="ic ix" width="15.8" height="15.8" viewBox="0 0 15 15"><path transform="translate(0.45 0)" d="M3.3 3.3L11.7 11.7M11.7 3.3L3.3 11.7" stroke="#3273e6" stroke-width="4.1" stroke-linecap="square" fill="none"/></svg><svg class="ic iu" width="16" height="20" viewBox="0 0 16 20"><path transform="translate(-0.3 0.3)" d="M7.9 0.3L13.6 6.7H9.7V17H15.4V19.4H0.4V17H6.2V6.7H2.3Z" fill="#3273e6"/></svg></div><div class="c c1">654000000000</div><div class="c c2">Pertes s/créances irrécouvrables</div><div class="c cn neg">-17 480</div><div class="c cn neg">-17 480</div><div class="c cn pos"></div><div class="c cn pos"></div><div class="c cn pos"></div><div class="c cn pos"></div><div class="c cn neg">-17 480</div><div class="c cn pos"></div><div class="c cn pos"></div><div class="c cn"></div></div>
<div class="row"><div class="c c0"><span class="cb"></span><svg class="ic ie" width="20" height="21" viewBox="0 0 20 21"><path d="M6 4.15H2.9Q1.45 4.15 1.45 5.6V16.4Q1.45 17.85 2.9 17.85H12.4Q13.85 17.85 13.85 16.4V12.3" fill="none" stroke="#3273e6" stroke-width="2.3" stroke-linecap="round"/><path d="M5.00 13.00L5.74 10.58L7.46 12.39Z" fill="#3273e6"/><path d="M5.97 9.67L14.17 1.89L16.58 4.43L8.38 12.20Z" fill="#3273e6"/><path d="M14.89 1.20L16.42 -0.25L17.55 -0.22L18.86 1.16L18.83 2.29L17.30 3.74Z" fill="#3273e6"/></svg><svg class="ic ix" width="15.8" height="15.8" viewBox="0 0 15 15"><path transform="translate(0.45 0)" d="M3.3 3.3L11.7 11.7M11.7 3.3L3.3 11.7" stroke="#3273e6" stroke-width="4.1" stroke-linecap="square" fill="none"/></svg><svg class="ic iu" width="16" height="20" viewBox="0 0 16 20"><path transform="translate(-0.3 0.3)" d="M7.9 0.3L13.6 6.7H9.7V17H15.4V19.4H0.4V17H6.2V6.7H2.3Z" fill="#3273e6"/></svg></div><div class="c c1">661100000000</div><div class="c c2">Interets des emprunts et dettes</div><div class="c cn neg">-4 438</div><div class="c cn neg">-4 434</div><div class="c cn neg">-10</div><div class="c cn neg">-1 027</div><div class="c cn neg">-6</div><div class="c cn neg">-4</div><div class="c cn neg">-983</div><div class="c cn pos"></div><div class="c cn pos"></div><div class="c cn"></div></div>
<div class="row"><div class="c c0"><span class="cb"></span><svg class="ic ie" width="20" height="21" viewBox="0 0 20 21"><path d="M6 4.15H2.9Q1.45 4.15 1.45 5.6V16.4Q1.45 17.85 2.9 17.85H12.4Q13.85 17.85 13.85 16.4V12.3" fill="none" stroke="#3273e6" stroke-width="2.3" stroke-linecap="round"/><path d="M5.00 13.00L5.74 10.58L7.46 12.39Z" fill="#3273e6"/><path d="M5.97 9.67L14.17 1.89L16.58 4.43L8.38 12.20Z" fill="#3273e6"/><path d="M14.89 1.20L16.42 -0.25L17.55 -0.22L18.86 1.16L18.83 2.29L17.30 3.74Z" fill="#3273e6"/></svg><svg class="ic ix" width="15.8" height="15.8" viewBox="0 0 15 15"><path transform="translate(0.45 0)" d="M3.3 3.3L11.7 11.7M11.7 3.3L3.3 11.7" stroke="#3273e6" stroke-width="4.1" stroke-linecap="square" fill="none"/></svg><svg class="ic iu" width="16" height="20" viewBox="0 0 16 20"><path transform="translate(-0.3 0.3)" d="M7.9 0.3L13.6 6.7H9.7V17H15.4V19.4H0.4V17H6.2V6.7H2.3Z" fill="#3273e6"/></svg></div><div class="c c1">661600000000</div><div class="c c2">Intérêts bancaires</div><div class="c cn neg">-2 872</div><div class="c cn neg">-2 865</div><div class="c cn neg">-264</div><div class="c cn neg">-259</div><div class="c cn neg">-255</div><div class="c cn neg">-250</div><div class="c cn neg">-246</div><div class="c cn neg">-241</div><div class="c cn neg">-237</div><div class="c cn"></div></div>
<div class="row"><div class="c c0"><span class="cb"></span><svg class="ic ie" width="20" height="21" viewBox="0 0 20 21"><path d="M6 4.15H2.9Q1.45 4.15 1.45 5.6V16.4Q1.45 17.85 2.9 17.85H12.4Q13.85 17.85 13.85 16.4V12.3" fill="none" stroke="#3273e6" stroke-width="2.3" stroke-linecap="round"/><path d="M5.00 13.00L5.74 10.58L7.46 12.39Z" fill="#3273e6"/><path d="M5.97 9.67L14.17 1.89L16.58 4.43L8.38 12.20Z" fill="#3273e6"/><path d="M14.89 1.20L16.42 -0.25L17.55 -0.22L18.86 1.16L18.83 2.29L17.30 3.74Z" fill="#3273e6"/></svg><svg class="ic ix" width="15.8" height="15.8" viewBox="0 0 15 15"><path transform="translate(0.45 0)" d="M3.3 3.3L11.7 11.7M11.7 3.3L3.3 11.7" stroke="#3273e6" stroke-width="4.1" stroke-linecap="square" fill="none"/></svg><svg class="ic iu" width="16" height="20" viewBox="0 0 16 20"><path transform="translate(-0.3 0.3)" d="M7.9 0.3L13.6 6.7H9.7V17H15.4V19.4H0.4V17H6.2V6.7H2.3Z" fill="#3273e6"/></svg></div><div class="c c1">706000000000</div><div class="c c2">Prestations de services 20%</div><div class="c cn pos">152 580</div><div class="c cn pos">140 000</div><div class="c cn pos">11 663</div><div class="c cn pos">11 667</div><div class="c cn pos">11 667</div><div class="c cn pos">11 667</div><div class="c cn pos">11 667</div><div class="c cn pos">11 667</div><div class="c cn pos">11 667</div><div class="c cn"></div></div>
<div class="row"><div class="c c0"><span class="cb"></span><svg class="ic ie" width="20" height="21" viewBox="0 0 20 21"><path d="M6 4.15H2.9Q1.45 4.15 1.45 5.6V16.4Q1.45 17.85 2.9 17.85H12.4Q13.85 17.85 13.85 16.4V12.3" fill="none" stroke="#3273e6" stroke-width="2.3" stroke-linecap="round"/><path d="M5.00 13.00L5.74 10.58L7.46 12.39Z" fill="#3273e6"/><path d="M5.97 9.67L14.17 1.89L16.58 4.43L8.38 12.20Z" fill="#3273e6"/><path d="M14.89 1.20L16.42 -0.25L17.55 -0.22L18.86 1.16L18.83 2.29L17.30 3.74Z" fill="#3273e6"/></svg><svg class="ic ix" width="15.8" height="15.8" viewBox="0 0 15 15"><path transform="translate(0.45 0)" d="M3.3 3.3L11.7 11.7M11.7 3.3L3.3 11.7" stroke="#3273e6" stroke-width="4.1" stroke-linecap="square" fill="none"/></svg><svg class="ic iu" width="16" height="20" viewBox="0 0 16 20"><path transform="translate(-0.3 0.3)" d="M7.9 0.3L13.6 6.7H9.7V17H15.4V19.4H0.4V17H6.2V6.7H2.3Z" fill="#3273e6"/></svg></div><div class="c c1">707000000000</div><div class="c c2">Compositions 20%</div><div class="c cn pos">298 006</div><div class="c cn pos">250 000</div><div class="c cn pos">20 837</div><div class="c cn pos">20 833</div><div class="c cn pos">20 833</div><div class="c cn pos">20 833</div><div class="c cn pos">20 833</div><div class="c cn pos">20 833</div><div class="c cn pos">20 833</div><div class="c cn"></div></div>
<div class="row"><div class="c c0"><span class="cb"></span><svg class="ic ie" width="20" height="21" viewBox="0 0 20 21"><path d="M6 4.15H2.9Q1.45 4.15 1.45 5.6V16.4Q1.45 17.85 2.9 17.85H12.4Q13.85 17.85 13.85 16.4V12.3" fill="none" stroke="#3273e6" stroke-width="2.3" stroke-linecap="round"/><path d="M5.00 13.00L5.74 10.58L7.46 12.39Z" fill="#3273e6"/><path d="M5.97 9.67L14.17 1.89L16.58 4.43L8.38 12.20Z" fill="#3273e6"/><path d="M14.89 1.20L16.42 -0.25L17.55 -0.22L18.86 1.16L18.83 2.29L17.30 3.74Z" fill="#3273e6"/></svg><svg class="ic ix" width="15.8" height="15.8" viewBox="0 0 15 15"><path transform="translate(0.45 0)" d="M3.3 3.3L11.7 11.7M11.7 3.3L3.3 11.7" stroke="#3273e6" stroke-width="4.1" stroke-linecap="square" fill="none"/></svg><svg class="ic iu" width="16" height="20" viewBox="0 0 16 20"><path transform="translate(-0.3 0.3)" d="M7.9 0.3L13.6 6.7H9.7V17H15.4V19.4H0.4V17H6.2V6.7H2.3Z" fill="#3273e6"/></svg></div><div class="c c1">707100000000</div><div class="c c2">Ornements &amp; arbustes 20%</div><div class="c cn pos">110 806</div><div class="c cn pos">120 000</div><div class="c cn pos">10 000</div><div class="c cn pos">10 000</div><div class="c cn pos">10 000</div><div class="c cn pos">10 000</div><div class="c cn pos">10 000</div><div class="c cn pos">10 000</div><div class="c cn pos">10 000</div><div class="c cn"></div></div>
<div class="row"><div class="c c0"><span class="cb"></span><svg class="ic ie" width="20" height="21" viewBox="0 0 20 21"><path d="M6 4.15H2.9Q1.45 4.15 1.45 5.6V16.4Q1.45 17.85 2.9 17.85H12.4Q13.85 17.85 13.85 16.4V12.3" fill="none" stroke="#3273e6" stroke-width="2.3" stroke-linecap="round"/><path d="M5.00 13.00L5.74 10.58L7.46 12.39Z" fill="#3273e6"/><path d="M5.97 9.67L14.17 1.89L16.58 4.43L8.38 12.20Z" fill="#3273e6"/><path d="M14.89 1.20L16.42 -0.25L17.55 -0.22L18.86 1.16L18.83 2.29L17.30 3.74Z" fill="#3273e6"/></svg><svg class="ic ix" width="15.8" height="15.8" viewBox="0 0 15 15"><path transform="translate(0.45 0)" d="M3.3 3.3L11.7 11.7M11.7 3.3L3.3 11.7" stroke="#3273e6" stroke-width="4.1" stroke-linecap="square" fill="none"/></svg><svg class="ic iu" width="16" height="20" viewBox="0 0 16 20"><path transform="translate(-0.3 0.3)" d="M7.9 0.3L13.6 6.7H9.7V17H15.4V19.4H0.4V17H6.2V6.7H2.3Z" fill="#3273e6"/></svg></div><div class="c c1">707110000000</div><div class="c c2">Plantes vertes 20%</div><div class="c cn pos">61 763</div><div class="c cn pos">60 000</div><div class="c cn pos">5 000</div><div class="c cn pos">5 000</div><div class="c cn pos">5 000</div><div class="c cn pos">5 000</div><div class="c cn pos">5 000</div><div class="c cn pos">5 000</div><div class="c cn pos">5 000</div><div class="c cn"></div></div>
</div>
</div>
<div id="pager">
<div class="abs" style="left:0;top:0;width:1551px;height:1px;background:#99b6ec;"></div>
<div class="abs" style="left:-1px;top:2px;width:1552px;height:29px;background:#99b6ec;"></div>
<div class="abs" style="left:-1px;top:32px;width:1552px;height:1px;background:#99b6ec;"></div>
<div class="abs pg dim" style="left:12px;top:8px;">1</div>
<svg class="abs" style="left:36px;top:10px;opacity:.5" width="26" height="12" viewBox="0 0 26 12"><path d="M1 6L9 1.5V10.5ZM8 6L16 1.5V10.5ZM15 6L23 1.5V10.5Z" fill="#fff"/></svg>
<svg class="abs" style="left:74px;top:10px;opacity:.5" width="18" height="12" viewBox="0 0 18 12"><path d="M1 6L9 1.5V10.5ZM8 6L16 1.5V10.5Z" fill="#fff"/></svg>
<svg class="abs" style="left:110px;top:10px;opacity:.5" width="12" height="12" viewBox="0 0 12 12"><path d="M1 6L9.5 1.5V10.5Z" fill="#fff"/></svg>
<div class="abs" style="left:133px;top:6px;width:30px;height:17px;background:#fff;font-size:13px;line-height:15px;text-align:right;padding-right:2px;color:#000;">1</div>
<svg class="abs" style="left:176px;top:10px;" width="12" height="12" viewBox="0 0 12 12"><path d="M10.5 6L2 1.5V10.5Z" fill="#fff"/></svg>
<svg class="abs" style="left:206px;top:10px;opacity:.5" width="18" height="12" viewBox="0 0 18 12"><path d="M17 6L9 1.5V10.5ZM10 6L2 1.5V10.5Z" fill="#fff"/></svg>
<svg class="abs" style="left:234.5px;top:10px;opacity:.5" width="26" height="12" viewBox="0 0 26 12"><path d="M25 6L17 1.5V10.5ZM18 6L10 1.5V10.5ZM11 6L3 1.5V10.5Z" fill="#fff"/></svg>
<div class="abs pg" style="left:281px;top:8px;">2</div>
</div>
<div class="hr" style="left:24px;top:858px;width:1552px;"></div>
<div id="btns"><div class="btn">Nouvelle ligne</div>
<div class="btn">Import</div>
<div class="btn">Mise à jour à partir du réalisé</div>
<div class="btn">Appliquer un coefficient</div>
<div class="btn">Modification groupée</div>
<div class="btn">Recalculer soldes N-1</div>
<div class="btn">Supprimer</div>
<div class="btn">Retour</div></div>
</body></html>
